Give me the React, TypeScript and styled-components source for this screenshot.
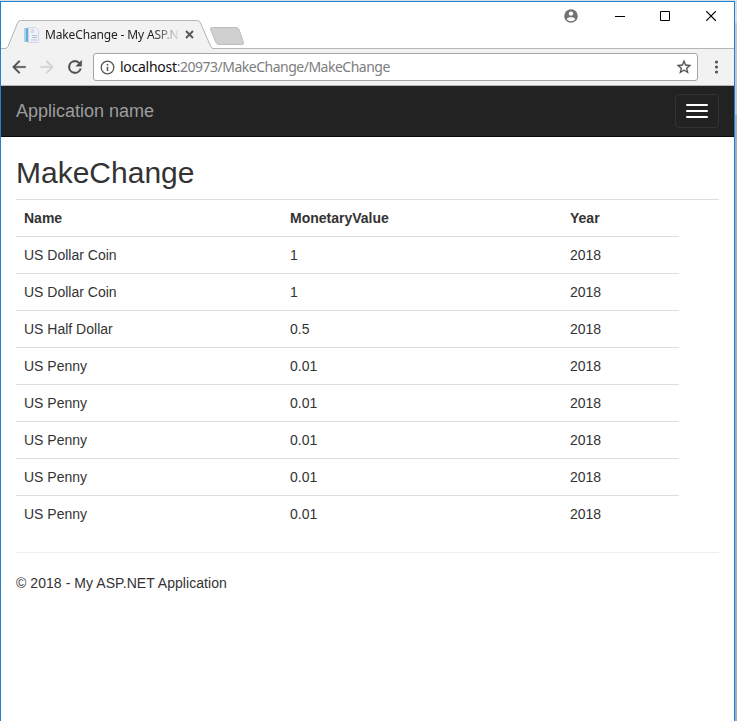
import React from 'react';
import styled, { createGlobalStyle } from 'styled-components';

const GlobalStyle = createGlobalStyle`
  * { box-sizing: border-box; }
  html, body { margin: 0; padding: 0; overflow: hidden; }
  body { background: #fff; }
`;

const Desktop = styled.div`
  width: 737px;
  height: 721px;
  padding: 1px 2px 0 0;
  background: linear-gradient(#dcdfdf 0 23px, #c3c7cb 23px 115px, #a5adbb 115px);
`;

const Window = styled.div`
  display: flex;
  flex-direction: column;
  width: 735px;
  height: 720px;
  border: 1px solid #1a82d8;
  border-bottom: 0;
  background: #fff;
  font-family: 'Liberation Sans', Arial, sans-serif;
`;

const TitleBar = styled.header`
  display: flex;
  flex: none;
  align-items: flex-end;
  height: 47px;
  border-bottom: 1px solid #b4b6b4;
  font-family: 'Noto Sans', 'Open Sans', sans-serif;
`;

const Tab = styled.div`
  position: relative;
  display: flex;
  align-items: center;
  width: 212px;
  height: 29px;
  margin-bottom: -1px;
  padding-left: 22px;
`;

const TabShape = styled.svg`
  position: absolute;
  inset: 0;
`;

const PageIcon = styled.svg`
  position: relative;
  flex: none;
`;

const TabTitle = styled.span`
  position: relative;
  width: 134px;
  margin-left: 6px;
  white-space: nowrap;
  color: #222;
  font-size: 12px;
  line-height: 20px;
  letter-spacing: -0.15px;
  mask-image: linear-gradient(to right, #000 108px, transparent 136px);
`;

const TabClose = styled.svg`
  position: relative;
  flex: none;
  margin-left: 6px;
`;

const NewTab = styled.svg`
  align-self: flex-end;
  margin: 0 0 3px -4px;
`;

const WindowControls = styled.div`
  display: flex;
  align-self: flex-start;
  align-items: center;
  height: 28px;
  margin-left: auto;
`;

const ControlCell = styled.span<{ $width: number }>`
  display: flex;
  justify-content: center;
  width: ${({ $width }) => $width}px;
`;

const Toolbar = styled.nav`
  display: flex;
  flex: none;
  align-items: center;
  height: 37px;
  border-bottom: 1px solid #b6b4b6;
  background: #f2f2f2;
  padding-left: 8px;
`;

const ToolIcon = styled.svg`
  flex: none;
  margin-right: 8px;
`;

const AddressBar = styled.div`
  display: flex;
  align-items: center;
  width: 605px;
  height: 28px;
  padding: 0 5px 0 6px;
  border: 1px solid #a5a5a5;
  border-radius: 3px;
  background: #fff;
`;

const Url = styled.span`
  flex: 1;
  margin-left: 5px;
  color: #7d7d7d;
  font: 14px/20px 'Noto Sans', 'Open Sans', sans-serif;
  letter-spacing: -0.5px;
  white-space: nowrap;
`;

const Host = styled.span`
  color: #111;
  letter-spacing: -0.27px;
`;

const MenuDots = styled.svg`
  margin-left: 10px;
`;

const Navbar = styled.div`
  display: flex;
  flex: none;
  align-items: center;
  justify-content: space-between;
  height: 51px;
  padding: 0 15px;
  border-bottom: 1px solid #080808;
  background: #222;
`;

const Brand = styled.span`
  color: #9d9d9d;
  font-size: 18px;
  line-height: 20px;
`;

const MenuToggle = styled.button`
  display: flex;
  flex-direction: column;
  gap: 4px;
  width: 44px;
  height: 34px;
  padding: 9px 10px;
  border: 1px solid #333;
  border-radius: 4px;
  background: transparent;
`;

const ToggleBar = styled.span`
  width: 22px;
  height: 2px;
  border-radius: 1px;
  background: #fff;
`;

const Content = styled.main`
  padding: 0 15px;
  color: #333;
  font-size: 14px;
  line-height: 20px;
`;

const Heading = styled.h2`
  margin: 19px 0 10px;
  font-size: 30px;
  font-weight: 400;
  line-height: 33px;
`;

const TableArea = styled.section`
  border-top: 1px solid #ddd;
`;

const Row = styled.div<{ $header?: boolean }>`
  display: grid;
  grid-template-columns: 266px 280px 117px;
  width: 663px;
  height: ${({ $header }) => ($header ? 36 : 37)}px;
  border-top: ${({ $header }) => ($header ? '0' : '1px solid #ddd')};
  font-weight: ${({ $header }) => ($header ? 700 : 400)};
`;

const Cell = styled.span`
  padding: 8px;
`;

const Divider = styled.hr`
  margin: 20px 0;
  border: 0;
  border-top: 1px solid #eee;
`;

const Footer = styled.p`
  margin: 0;
  letter-spacing: 0.06px;
`;

const coins = [
  ['US Dollar Coin', '1'],
  ['US Dollar Coin', '1'],
  ['US Half Dollar', '0.5'],
  ['US Penny', '0.01'],
  ['US Penny', '0.01'],
  ['US Penny', '0.01'],
  ['US Penny', '0.01'],
  ['US Penny', '0.01'],
];

export default function App() {
  return (
    <>
      <GlobalStyle />
      <Desktop>
        <Window>
          <TitleBar>
            <Tab>
              <TabShape width="212" height="29" viewBox="0 0 212 29">
                <path d="M0 28.5H4Q6 28.5 7 26.5L16.500 3Q17.500 .5 19.500 .5H196.500Q198.500 .5 199.500 3L209.500 26Q210.500 28.500 212 28.500V29H0Z" fill="#f2f2f2" />
                <path d="M0 28.5H4Q6 28.5 7 26.5L16.500 3Q17.500 .5 19.500 .5H196.500Q198.500 .5 199.500 3L209.500 26Q210.500 28.500 212 28.500" fill="none" stroke="#b4b6b4" />
              </TabShape>
              <PageIcon width="16" height="16" viewBox="0 0 16 16">
                <path d="M1 1h4v14H1z" fill="#66acd6" />
                <path d="M1 1h2v14H1z" fill="#a9d3ea" />
                <path d="M5.500 .5h7l3 3v12h-10z" fill="#eef2f8" stroke="#d0d7e2" />
                <path d="M8 3h3M8 5h3M9 8.500h5M9 10.500h5M8 13h6" stroke="#b5c2d3" fill="none" />
              </PageIcon>
              <TabTitle>MakeChange - My ASP.N</TabTitle>
              <TabClose width="9" height="9" viewBox="0 0 9 9">
                <path d="M1 1l7 7M8 1L1 8" stroke="#555" strokeWidth="1.800" />
              </TabClose>
            </Tab>
            <NewTab width="37" height="18" viewBox="0 0 37 18">
              <path d="M3 .5H27Q29 .5 30 2.500L34.500 15.500Q35 17.500 33 17.500H10Q8 17.500 7 15.500L1.500 2.500Q1 .5 3 .5Z" fill="#d0d0d0" stroke="#bcbebc" />
            </NewTab>
            <WindowControls>
              <ControlCell $width={54}>
                <svg width="14" height="14" viewBox="0 0 14 14">
                  <circle cx="7" cy="7" r="6.800" fill="#737373" />
                  <circle cx="7" cy="4.600" r="2.200" fill="#fff" />
                  <path d="M2.800 10.200C3.300 7.700 10.700 7.700 11.200 10.200C9.500 12.800 4.500 12.800 2.800 10.200Z" fill="#fff" />
                </svg>
              </ControlCell>
              <ControlCell $width={44}>
                <svg width="10" height="11" shapeRendering="crispEdges"><path d="M0 5h10v1H0z" /></svg>
              </ControlCell>
              <ControlCell $width={46}>
                <svg width="10" height="10"><path d="M.5 .5h9v9h-9z" fill="none" stroke="#000" /></svg>
              </ControlCell>
              <ControlCell $width={46}>
                <svg width="10" height="10"><path d="M.5 .5l9 9M9.500 .5l-9 9" stroke="#000" strokeWidth="1.100" strokeLinecap="square" /></svg>
              </ControlCell>
            </WindowControls>
          </TitleBar>
          <Toolbar>
            <ToolIcon width="20" height="20" viewBox="0 0 24 24">
              <path d="M20 11H7.830l5.590-5.590L12 4l-8 8 8 8 1.410-1.410L7.830 13H20z" fill="#505050" stroke="#505050" strokeWidth=".3" />
            </ToolIcon>
            <ToolIcon width="20" height="20" viewBox="0 0 24 24">
              <path d="M4 11h12.170l-5.590-5.590L12 4l8 8-8 8-1.410-1.410L16.170 13H4z" fill="#d2d2d2" stroke="#d2d2d2" strokeWidth=".3" />
            </ToolIcon>
            <ToolIcon width="20" height="20" viewBox="0 0 24 24">
              <path d="M17.650 6.350A7.958 7.958 0 0 0 12 4a8 8 0 1 0 7.730 10h-2.080A6 6 0 1 1 12 6c1.660 0 3.140.69 4.220 1.780L13 11h7V4z" fill="#505050" stroke="#505050" strokeWidth=".5" />
            </ToolIcon>
            <AddressBar>
              <svg width="15" height="15" viewBox="0 0 15 15">
                <circle cx="7.500" cy="7.500" r="6.300" fill="none" stroke="#555" strokeWidth="1.300" />
                <path d="M7.500 6.700v4.300M7.500 4v1.600" stroke="#555" strokeWidth="1.500" />
              </svg>
              <Url><Host>localhost</Host>:20973/MakeChange/MakeChange</Url>
              <svg width="16" height="16" viewBox="1 1 22 22">
                <path d="M22 9.240l-7.190-.62L12 2 9.190 8.630 2 9.240l5.460 4.730L5.820 21 12 17.270 18.180 21l-1.630-7.030zM12 15.400l-3.760 2.270 1-4.280-3.320-2.880 4.380-.38L12 6.100l1.710 4.040 4.380.38-3.320 2.880 1 4.280z" fill="#505050" stroke="#505050" strokeWidth=".3" />
              </svg>
            </AddressBar>
            <MenuDots width="16" height="16" viewBox="0 0 16 16">
              <circle cx="8.500" cy="3" r="1.600" fill="#555" />
              <circle cx="8.500" cy="8" r="1.600" fill="#555" />
              <circle cx="8.500" cy="13" r="1.600" fill="#555" />
            </MenuDots>
          </Toolbar>
          <Navbar>
            <Brand>Application name</Brand>
            <MenuToggle aria-label="Toggle navigation">
              <ToggleBar />
              <ToggleBar />
              <ToggleBar />
            </MenuToggle>
          </Navbar>
          <Content>
            <Heading>MakeChange</Heading>
            <TableArea>
              <Row $header>
                <Cell>Name</Cell>
                <Cell>MonetaryValue</Cell>
                <Cell>Year</Cell>
              </Row>
              {coins.map(([name, value], index) => (
                <Row key={index}>
                  <Cell>{name}</Cell>
                  <Cell>{value}</Cell>
                  <Cell>2018</Cell>
                </Row>
              ))}
            </TableArea>
            <Divider />
            <Footer>© 2018 - My ASP.NET Application</Footer>
          </Content>
        </Window>
      </Desktop>
    </>
  );
}
